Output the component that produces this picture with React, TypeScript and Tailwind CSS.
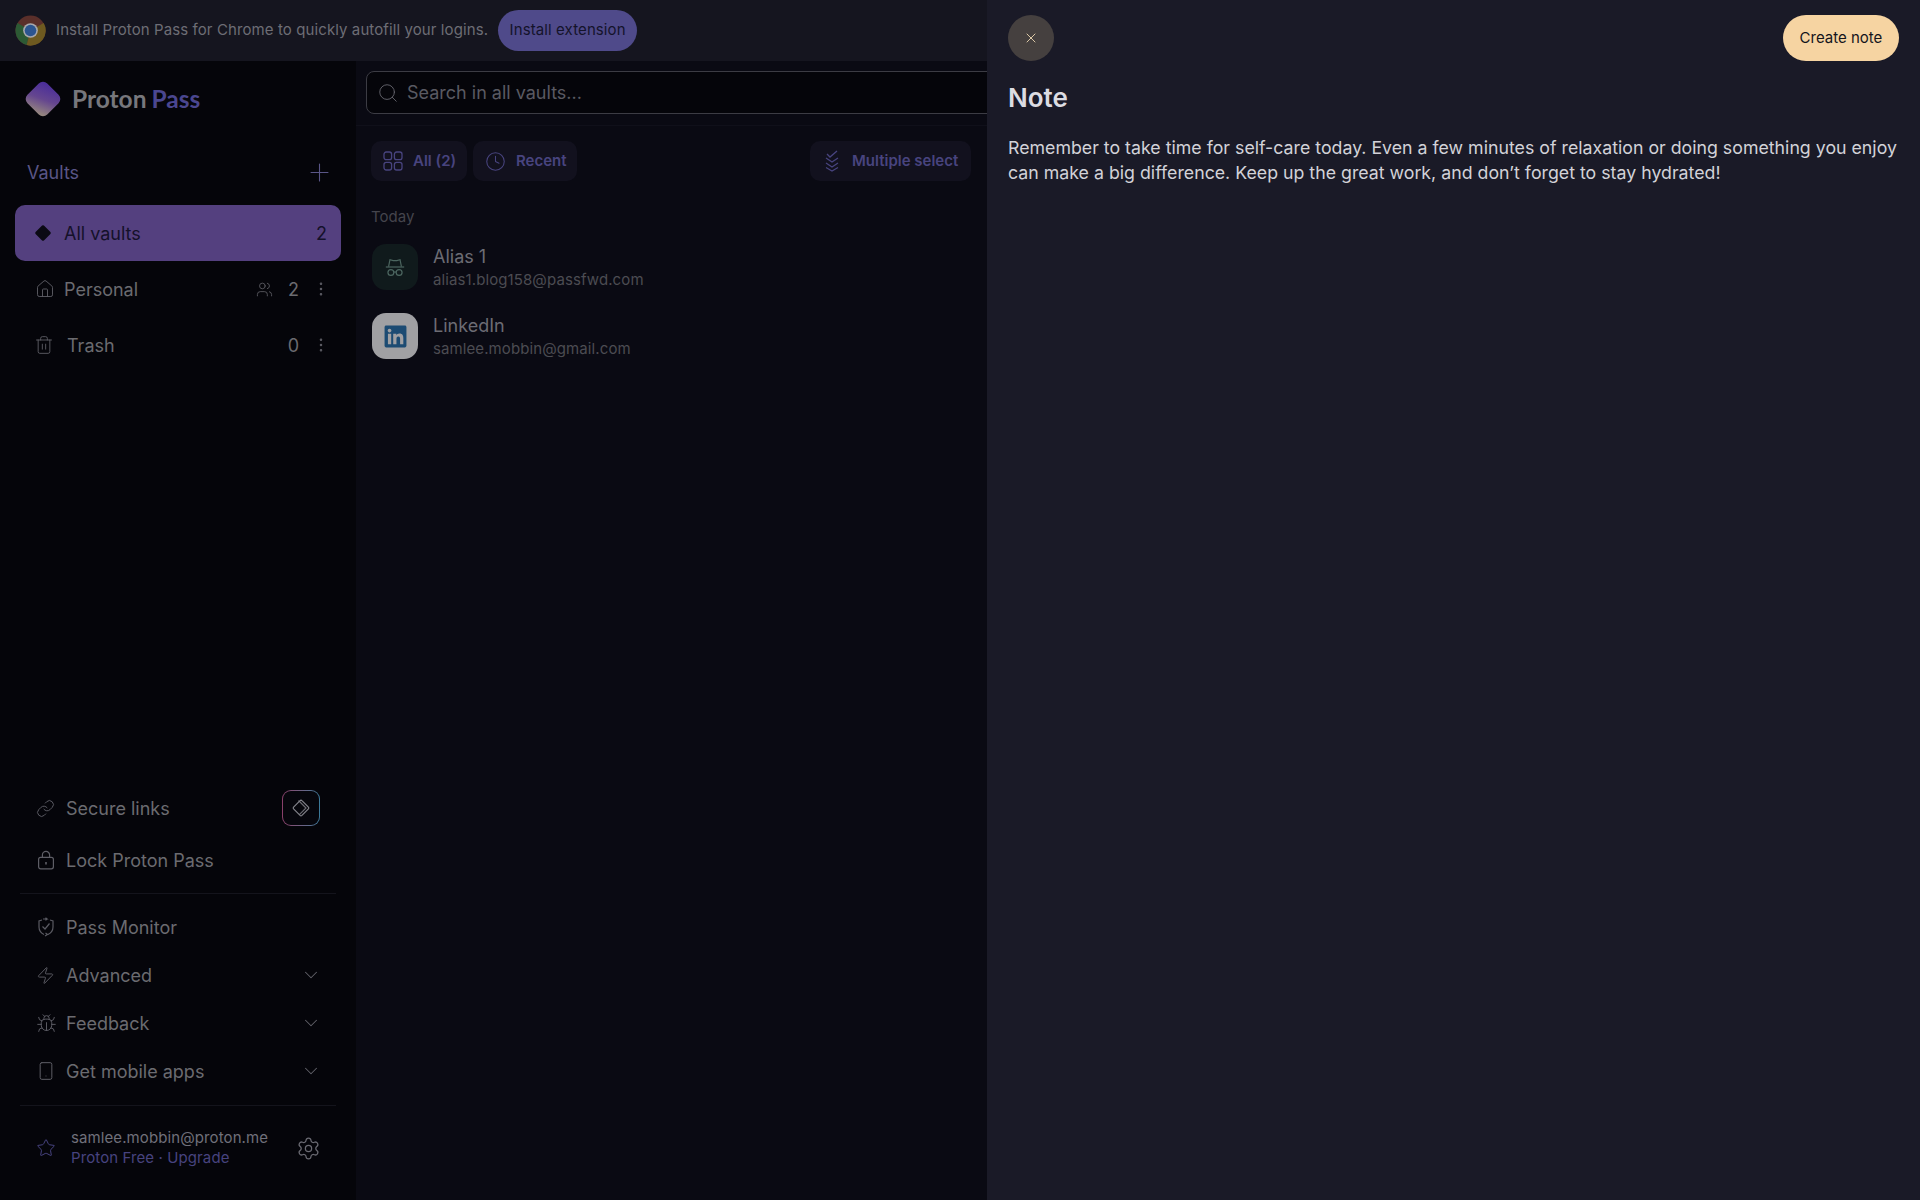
import React from 'react';
import {
  Search, Plus, House, Users, EllipsisVertical, Trash2, Link, ChevronDown,
  Star, Settings, Bug, Smartphone, Zap, X, Clock,
} from 'lucide-react';
import { FaLinkedin } from 'react-icons/fa';

const DIAMOND = 'M12 2.6a1.6 1.6 0 0 1 1.1.5l7.8 7.8a1.6 1.6 0 0 1 0 2.2l-7.8 7.8a1.6 1.6 0 0 1-2.2 0l-7.8-7.8a1.6 1.6 0 0 1 0-2.2l7.8-7.8a1.6 1.6 0 0 1 1.1-.5z';

const ChromeLogo = () => (
  <svg width="31" height="31" viewBox="0 0 32 32">
    <circle cx="16" cy="16" r="15.5" fill="#5a2f2a" />
    <path d="M16 16 L2.6 8.2 A15.5 15.5 0 0 0 12 31 Z" fill="#2c5a34" />
    <path d="M16 16 L12 31 A15.5 15.5 0 0 0 29.6 8.2 Z" fill="#6e5a20" />
    <circle cx="16" cy="16" r="7.6" fill="#a8a8ac" />
    <circle cx="16" cy="16" r="6" fill="#2c5590" />
  </svg>
);

const ProtonLogo = () => (
  <svg width="42" height="42" viewBox="0 0 42 42">
    <defs>
      <linearGradient id="pp" x1="0.3" y1="0" x2="0.75" y2="1">
        <stop offset="0" stopColor="#4c2f9a" />
        <stop offset="0.5" stopColor="#65468f" />
        <stop offset="1" stopColor="#96877f" />
      </linearGradient>
    </defs>
    <rect x="7" y="7" width="28" height="28" rx="6" fill="url(#pp)" transform="rotate(45 21 21)" />
  </svg>
);

const AliasIcon = () => (
  <svg width="22" height="22" viewBox="0 0 24 24" fill="none" stroke="#4c6660" strokeWidth="1.3">
    <path d="M5 11.5 L6.5 4 L10 5 L14 5 L17.5 4 L19 11.5" />
    <path d="M2 12 H22" />
    <circle cx="7.5" cy="18" r="3.2" />
    <circle cx="16.5" cy="18" r="3.2" />
    <path d="M10.7 17.5 H13.3" />
  </svg>
);

const GridIcon = () => (
  <svg width="20" height="20" viewBox="0 0 20 20" fill="none" stroke="#48447f" strokeWidth="1.3">
    <rect x="1" y="1" width="7.6" height="7.6" rx="2.2" />
    <rect x="11.4" y="1" width="7.6" height="7.6" rx="2.2" />
    <rect x="1" y="11.4" width="7.6" height="7.6" rx="2.2" />
    <rect x="11.4" y="11.4" width="7.6" height="7.6" rx="2.2" />
  </svg>
);

const MultiSelectIcon = () => (
  <svg width="18" height="22" viewBox="0 0 18 22" fill="none" stroke="#48447f" strokeWidth="1.3">
    <path d="M3 8 L9 12 L15 8" />
    <path d="M3 13 L9 17 L15 13" />
    <path d="M3 17.5 L9 21 L15 17.5" />
    <path d="M4 4 L7 7 L14 1" />
  </svg>
);

const MonitorIcon = () => (
  <svg width="20" height="20" viewBox="0 0 20 20" fill="none" stroke="#5a5a62" strokeWidth="1.2">
    <path d="M6 3 L3 4 V10 C3 13 5 16 8 17.5" />
    <path d="M14 3 L17 4 V10 C17 13 15 16 12 17.5" />
    <path d="M7 2 H11 L9.5 0.8 M11 2 L9.5 3.4" />
    <path d="M6.5 9.5 L9 12 L13.5 6.5" />
    <path d="M9 19 L11.5 17.5 L9.5 16" />
  </svg>
);

const LockIcon = () => (
  <svg width="20" height="20" viewBox="0 0 20 20" fill="none" stroke="#5e5e66" strokeWidth="1.2">
    <rect x="2.6" y="7.4" width="14.8" height="11.4" rx="2" />
    <path d="M6.4 7.4 V5 A3.6 3.6 0 0 1 13.6 5 V7.4" />
    <path d="M10 12 V14.4" strokeWidth="1.6" />
  </svg>
);

const DiamondOutline = () => (
  <svg width="20" height="20" viewBox="0 0 24 24" fill="none" stroke="#85858c" strokeWidth="1.4">
    <path d={DIAMOND} />
    <path d="M12 3 L21 12 L13 20" opacity="0.8" transform="translate(-3 0)" />
  </svg>
);

const navLabel = 'text-[18px] text-[#6b6b70]';

const FooterRow = ({ icon, label, caret }: { icon: React.ReactNode; label: string; caret?: boolean }) => (
  <div className="flex h-[48px] items-center pl-[36px] pr-[34px]">
    <span className="flex w-[30px] shrink-0 items-center">{icon}</span>
    <span className={`flex-1 ${navLabel}`}>{label}</span>
    {caret && <ChevronDown size={22} strokeWidth={1.1} color="#62626a" />}
  </div>
);

const Sidebar = () => (
  <aside className="flex w-[356px] shrink-0 flex-col bg-[#05050a]">
    <div className="flex h-[76px] items-center gap-[8px] pl-[22px]">
      <ProtonLogo />
      <div className="flex gap-[5px] font-['Lato',sans-serif] text-[24.5px] font-bold">
        <span className="text-[#77777c]">Proton</span>
        <span className="text-[#4b4790]">Pass</span>
      </div>
    </div>

    <div className="mt-[21px] flex items-center justify-between pl-[27px] pr-[22px]">
      <span className="text-[18px] text-[#5a5687]">Vaults</span>
      <Plus size={29} strokeWidth={0.9} color="#5a5687" />
    </div>

    <div className="mt-[18px] flex flex-col gap-[1px] px-[15px]">
      <div className="flex h-[56px] items-center rounded-[10px] bg-[#54407f] pl-[18px] pr-[14px]">
        <svg width="20" height="20" viewBox="0 0 24 24" fill="#0b0a14">
          <path d={DIAMOND} />
        </svg>
        <span className="ml-[11px] flex-1 text-[18px] text-[#14112a]">All vaults</span>
        <span className="text-[18px] text-[#14112a]">2</span>
      </div>
      <div className="flex h-[54px] items-center pl-[20px] pr-[11px]">
        <House size={20} strokeWidth={1.1} color="#5e5e66" />
        <span className={`ml-[9px] flex-1 ${navLabel}`}>Personal</span>
        <Users size={17} strokeWidth={1.2} color="#5e5e66" />
        <span className={`ml-[15px] ${navLabel}`}>2</span>
        <EllipsisVertical size={18} strokeWidth={1.4} color="#5e5e66" className="ml-[13px]" />
      </div>
      <div className="flex h-[56px] items-center pl-[19px] pr-[11px]">
        <Trash2 size={20} strokeWidth={1.1} color="#5e5e66" />
        <span className={`ml-[13px] flex-1 ${navLabel}`}>Trash</span>
        <span className={navLabel}>0</span>
        <EllipsisVertical size={18} strokeWidth={1.4} color="#5e5e66" className="ml-[13px]" />
      </div>
    </div>

    <div className="mt-auto flex flex-col">
      <div className="flex h-[50px] items-center pl-[36px] pr-[36px]">
        <span className="flex w-[30px] items-center">
          <Link size={19} strokeWidth={1.2} color="#5e5e66" />
        </span>
        <span className={`flex-1 ${navLabel}`}>Secure links</span>
        <div className="rounded-[9px] bg-linear-to-r from-[#8a3f6a] to-[#3a7a9a] p-px">
          <div className="flex h-[34px] w-[36px] items-center justify-center rounded-[8px] bg-[#06060c]">
            <DiamondOutline />
          </div>
        </div>
      </div>
      <div className="flex h-[54px] items-center pl-[36px]">
        <span className="flex w-[30px] items-center">
          <LockIcon />
        </span>
        <span className={navLabel}>Lock Proton Pass</span>
      </div>
      <div className="mx-[20px] mt-[6px] h-px bg-[#14141c]" />
      <div className="mt-[9px] flex flex-col">
        <FooterRow icon={<MonitorIcon />} label="Pass Monitor" />
        <FooterRow icon={<Zap size={19} strokeWidth={1.2} color="#5e5e66" />} label="Advanced" caret />
        <FooterRow icon={<Bug size={21} strokeWidth={1.1} color="#5e5e66" />} label="Feedback" caret />
        <FooterRow icon={<Smartphone size={20} strokeWidth={1.2} color="#5e5e66" />} label="Get mobile apps" caret />
      </div>
      <div className="mx-[20px] mt-[10px] h-px bg-[#14141c]" />
      <div className="flex h-[94px] items-center pb-[10px] pl-[36px] pr-[35px]">
        <Star size={20} strokeWidth={1.2} color="#47437f" />
        <div className="ml-[15px] flex-1 text-[15px] leading-[20px] tracking-[0.1px]">
          <div className="text-[#70707a]">samlee.mobbin@proton.me</div>
          <div className="text-[#47437f]">Proton Free · Upgrade</div>
        </div>
        <Settings size={25} strokeWidth={1.2} color="#6a6a72" />
      </div>
    </div>
  </aside>
);

const ListItem = ({ icon, boxClass, title, sub }: { icon: React.ReactNode; boxClass: string; title: string; sub: string }) => (
  <div className="flex items-center gap-[15px]">
    <div className={`flex h-[46px] w-[46px] items-center justify-center rounded-[14px] ${boxClass}`}>{icon}</div>
    <div className="pt-[1px]">
      <div className="text-[18px] leading-[24px] text-[#6c6c74]">{title}</div>
      <div className="text-[15px] leading-[21px] tracking-[0.1px] text-[#4c4c52]">{sub}</div>
    </div>
  </div>
);

const Chip = ({ children, className }: { children: React.ReactNode; className: string }) => (
  <div className={`flex h-[40px] items-center rounded-[10px] bg-[#12111e] text-[15px] font-semibold text-[#48447f] ${className}`}>
    {children}
  </div>
);

const MainList = () => (
  <main className="flex min-w-0 flex-1 flex-col bg-[#0a0a13]">
    <div className="h-[65px] shrink-0 border-b border-[#10101a] pl-[10px] pt-[10px]">
      <div className="flex h-[43px] w-[700px] items-center rounded-[8px] border border-[#3c3c44] bg-[#05050a] pl-[10px]">
        <Search size={22} strokeWidth={1} color="#66666e" />
        <span className="ml-[8px] text-[18px] text-[#5a5a62]">Search in all vaults...</span>
      </div>
    </div>
    <div className="flex items-center pl-[15px] pr-[16px] pt-[15px]">
      <Chip className="w-[96px] gap-[10px] pl-[12px]">
        <GridIcon />
        <span>All (2)</span>
      </Chip>
      <Chip className="ml-[6px] w-[104px] gap-[10px] pl-[12px]">
        <Clock size={21} strokeWidth={1.2} color="#48447f" />
        <span>Recent</span>
      </Chip>
      <Chip className="ml-auto w-[161px] gap-[11px] pl-[13px]">
        <MultiSelectIcon />
        <span>Multiple select</span>
      </Chip>
    </div>
    <div className="mt-[26px] pl-[15px] text-[15px] leading-[20px] text-[#44444c]">Today</div>
    <div className="mt-[17px] flex flex-col gap-[23px] pl-[16px]">
      <ListItem icon={<AliasIcon />} boxClass="bg-[#101a1c]" title="Alias 1" sub="alias1.blog158@passfwd.com" />
      <ListItem
        icon={<FaLinkedin size={25} color="#1c4b73" />}
        boxClass="bg-[#a0a0a3]"
        title="LinkedIn"
        sub="samlee.mobbin@gmail.com"
      />
    </div>
  </main>
);

export default function App() {
  return (
    <div className="flex h-[1200px] w-[1920px] overflow-hidden bg-[#0a0a13] font-['Inter',sans-serif]">
      <div className="flex w-[987px] shrink-0 flex-col">
        <div className="flex h-[61px] shrink-0 items-center bg-[#15151f] pl-[15px]">
          <ChromeLogo />
          <span className="ml-[10px] text-[15px] tracking-[0.1px] text-[#6d6d75]">Install Proton Pass for Chrome to quickly autofill your logins.</span>
          <div className="ml-[10px] flex h-[41px] w-[139px] items-center justify-center rounded-full bg-[#4f4a8a] text-[15px] tracking-[0.1px] text-[#14132a]">
            Install extension
          </div>
        </div>
        <div className="flex min-h-0 flex-1">
          <Sidebar />
          <MainList />
        </div>
      </div>

      <section className="flex flex-1 flex-col bg-[#1a1a27] pl-[21px] pr-[21px] pt-[15px]">
        <div className="flex items-center justify-between">
          <div className="flex h-[46px] w-[46px] items-center justify-center rounded-full bg-[#45403f]">
            <X size={16} strokeWidth={1.4} color="#e6d3ae" />
          </div>
          <div className="flex h-[46px] w-[116px] items-center justify-center rounded-full bg-[#f6d4a2] text-[15px] text-[#14141c]">
            Create note
          </div>
        </div>
        <h1 className="mt-[19px] text-[26px] leading-[36px] font-semibold text-[#dcdce2]">Note</h1>
        <p className="mt-[19px] text-[17.75px] leading-[25px] text-[#d2d2d8]">
          Remember to take time for self-care today. Even a few minutes of relaxation or doing something you enjoy can make a big difference. Keep up the great work, and don’t forget to stay hydrated!
        </p>
      </section>
    </div>
  );
}
